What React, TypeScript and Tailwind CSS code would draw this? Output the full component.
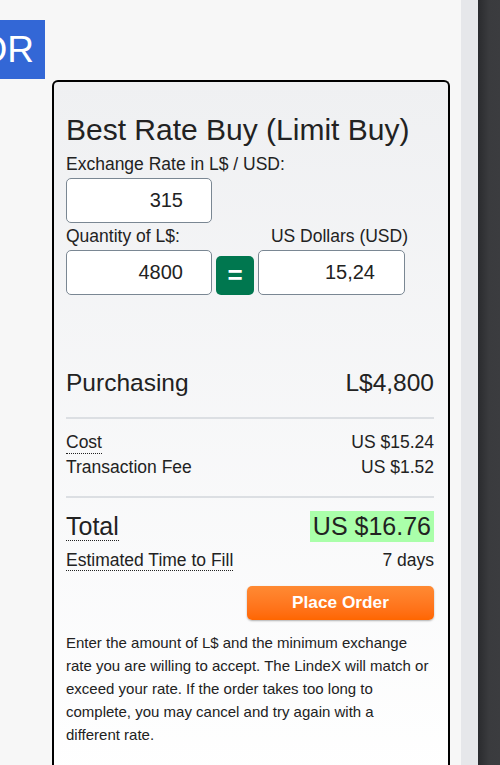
import { useState } from 'react';

export default function App() {
  const [rate, setRate] = useState('315');
  const [qty, setQty] = useState('4800');
  const [usd, setUsd] = useState('15,24');

  return (
    <div className="flex min-h-[765px] w-full overflow-hidden bg-[#f7f7f7] font-['Liberation_Sans',Arial,sans-serif] text-[#222]">
      <div className="flex-1">
        {/* Tab remnant */}
        <div className="mt-5 flex h-[59px] w-[45px] items-center justify-end overflow-hidden bg-[#3367d6] pr-[11px] text-[37px] text-white">
          <span className="whitespace-nowrap">OR</span>
        </div>

        {/* Order card */}
        <div className="mt-[1px] ml-[52px] min-h-[700px] w-[398px] rounded-t-[6px] border-2 border-b-0 border-black bg-gradient-to-b from-[#eff0f2] to-white pt-[31px] pr-[14px] pb-[40px] pl-[12px]">
          <h2 className="text-[30px] leading-[34px]">Best Rate Buy (Limit Buy)</h2>
          <label className="mt-[7px] block text-[17.5px] leading-[21px]">Exchange Rate in L$ / USD:</label>
          <input
            value={rate}
            onChange={(e) => setRate(e.target.value)}
            className="mt-[2.5px] block h-[45px] w-[146px] rounded-[5px] border border-[#7a8793] bg-white pr-[28px] text-right text-[20px] outline-none"
          />

          <div className="mt-[3.5px] flex w-[342px] justify-between text-[17.5px] leading-[21px]">
            <label>Quantity of L$:</label>
            <label>US Dollars (USD)</label>
          </div>
          <div className="mt-[2.5px] flex items-end">
            <input
              value={qty}
              onChange={(e) => setQty(e.target.value)}
              className="block h-[45px] w-[146px] rounded-[5px] border border-[#7a8793] bg-white pr-[28px] text-right text-[20px] outline-none"
            />
            <button className="ml-[4px] flex h-[39px] w-[38px] items-center justify-center rounded-[5px] bg-[#00774f] text-[26px] font-bold leading-none text-white">
              =
            </button>
            <input
              value={usd}
              onChange={(e) => setUsd(e.target.value)}
              className="ml-[4px] block h-[45px] w-[147px] rounded-[5px] border border-[#7a8793] bg-white pr-[29px] text-right text-[20px] outline-none"
            />
          </div>

          <div className="mt-[73px] flex items-baseline justify-between text-[24.5px] leading-[30px]">
            <span>Purchasing</span>
            <span>L$4,800</span>
          </div>
          <div className="mt-[19px] h-[2px] bg-[#dcdfe3]" />

          <div className="mt-[11.5px] flex justify-between text-[17.5px] leading-[25px]">
            <span className="relative">
              Cost
              <span className="absolute right-0 bottom-[1px] left-0 border-b border-dotted border-[#222]" />
            </span>
            <span>US $15.24</span>
          </div>
          <div className="flex justify-between text-[17.5px] leading-[25px]">
            <span>Transaction Fee</span>
            <span>US $1.52</span>
          </div>
          <div className="mt-[15.5px] h-[2px] bg-[#dcdfe3]" />

          <div className="mt-[13px] flex items-center justify-between">
            <span className="border-b border-dotted border-[#222] text-[25px] leading-[28px]">Total</span>
            <span className="bg-[#aaffaa] px-[3px] text-[25px] leading-[31px]">US $16.76</span>
          </div>
          <div className="mt-[8px] flex justify-between text-[17.5px] leading-[20px]">
            <span className="border-b border-dotted border-[#222]">Estimated Time to Fill</span>
            <span>7 days</span>
          </div>

          <div className="mt-[15px] flex justify-end">
            <button className="h-[34px] w-[187px] rounded-[5px] bg-gradient-to-b from-[#ff8a33] to-[#ff6600] text-[17.25px] font-bold text-white shadow-[0_1px_2px_rgba(0,0,0,0.3)]">
              Place Order
            </button>
          </div>

          <p className="mt-[11.5px] w-[364px] text-[15px] leading-[23px] text-[#222]">
            Enter the amount of L$ and the minimum exchange rate you are willing to accept. The LindeX will match or
            exceed your rate. If the order takes too long to complete, you may cancel and try again with a different rate.
          </p>
        </div>
      </div>

      {/* Right edge */}
      <div className="w-[17px] bg-[#e6e7ea]" />
      <div className="w-[22px] bg-gradient-to-r from-[#2a2b2e] via-[#3a3b3e] to-[#3b3c3f]" />
    </div>
  );
}
